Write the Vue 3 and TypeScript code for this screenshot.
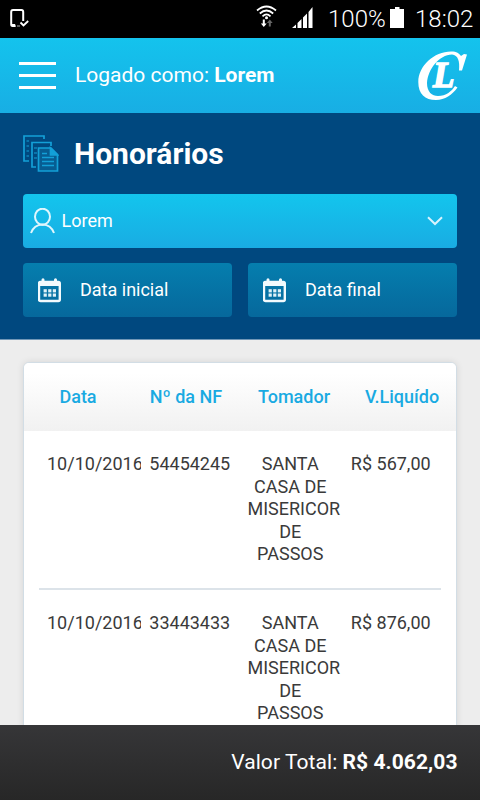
<script setup lang="ts">
interface Fee {
  date: string
  invoice: string
  client: string[]
  amount: string
}

const columns: string[] = ['Data', 'Nº da NF', 'Tomador', 'V.Liquído']
const client = ['SANTA', 'CASA DE', 'MISERICOR', 'DE', 'PASSOS']
const fees: Fee[] = [
  { date: '10/10/2016', invoice: '54454245', client, amount: 'R$ 567,00' },
  { date: '10/10/2016', invoice: '33443433', client, amount: 'R$ 876,00' },
]
const dateFields: string[] = ['Data inicial', 'Data final']
const calendarDots = [0, 1, 2, 3, 4, 5].map((i) => ({
  x: 5.6 + (i % 3) * 4.6,
  y: 11.2 + Math.floor(i / 3) * 4.3,
}))
</script>

<template>
  <div class="screen">
    <div class="status">
      <svg class="device-icon" width="20" height="20" viewBox="0 0 20 20">
        <path d="M13.200 12V3Q13.200 1 11.500 1H3Q1.200 1 1.200 3V15.500Q1.200 17 3 17H5" fill="none" stroke="#fff" stroke-width="2" />
        <path d="M1 15H5L6 17.800H2Z" fill="#fff" />
        <path d="M7 17H10" stroke="#999" stroke-width="1.2" />
        <path d="M10.500 13.500L13.500 16.500L18.200 12" fill="none" stroke="#fff" stroke-width="1.800" />
      </svg>
      <div class="status-right">
        <svg class="wifi" width="22" height="24" viewBox="0 0 22 24">
          <g fill="none" stroke="#fff" stroke-width="1.7">
            <path d="M1 5.500Q10.500 -2.500 20 5.500" />
            <path d="M3.800 8.500Q10.500 2.500 17.200 8.500" />
            <path d="M6.500 11.300Q10.500 7.500 14.500 11.300" />
          </g>
          <circle cx="10.500" cy="12.800" r="1.500" fill="#fff" />
          <path d="M6.800 14.500H8.800V18.500H10.700L7.800 22L4.900 18.500H6.800Z" fill="#fff" />
          <path d="M12.800 21.500V18H10.900L13.800 14.500L16.700 18H14.800V21.500Z" fill="#666" />
        </svg>
        <svg class="signal" width="21" height="21" viewBox="0 0 21 21" fill="#fff">
          <path d="M0 21L4 17.500V21ZM5.500 16L9.500 12V21H5.500ZM11 10.500L15 6.500V21H11ZM16.500 5L20.500 0V21H16.500Z" />
        </svg>
        <span class="percent">100%</span>
        <svg class="battery" width="14" height="21" viewBox="0 0 14 21" fill="#fff">
          <path d="M5 0H9.500V2H14V21H0V2H5Z" />
        </svg>
        <span class="clock">18:02</span>
      </div>
    </div>

    <header class="topbar">
      <div class="burger"><i></i><i></i><i></i></div>
      <p class="logged">Logado como: <b>Lorem</b></p>
      <svg class="logo" width="54" height="54" viewBox="0 0 54 54">
        <path
          d="M51 5.500L46 21.500L43 21.500C44 12 42 6 36 5.500C23 6 12 20 11 34C11 43 16 47 22 47C30 47 36 42 39 37L41.500 38.500C36 46 29 51 20 51C9 51 2.300 45 2.300 33C2.300 17 18 2.500 35 2.500C41 2.500 43 4.500 45 7L48 5Z"
          fill="#fff"
        />
        <text x="17" y="37.500">L</text>
      </svg>
    </header>

    <section class="filters">
      <div class="title-row">
        <svg width="36" height="38" viewBox="0 0 36 38" fill="none" stroke="#13a0d8" stroke-width="1.700">
          <path d="M6 26H1V1H21V4" />
          <path d="M13 32H9V7.500H28V11" />
          <path d="M3.500 6H6M3.500 11H6M3.500 16H6M3.500 21H6M11 13H14M11 18H14M11 23H14" stroke-width="1" />
          <path d="M15.500 13H28L34.500 19.500V36H15.500Z" fill="#075d92" />
          <path d="M27.500 13V20H34.500Z" fill="#13a0d8" />
          <path d="M19 18.500H24M19 22.500H31M19 26.500H31M19 30.500H31" />
        </svg>
        <h1>Honorários</h1>
      </div>
      <div class="select">
        <svg width="26" height="26" viewBox="0 0 26 26" fill="none" stroke="#e0f6fd" stroke-width="2">
          <ellipse cx="12.500" cy="8.700" rx="7.500" ry="8" />
          <path d="M1 25Q4 16.800 12.500 16.500Q21 16.800 24 25" />
        </svg>
        <span>Lorem</span>
        <svg class="chevron" width="16" height="10" viewBox="0 0 16 10" fill="none" stroke="#d8f3fd" stroke-width="2">
          <path d="M1 1.200L8 8L15 1.200" />
        </svg>
      </div>
      <div class="dates">
        <div v-for="field in dateFields" :key="field" class="date">
          <svg width="24" height="25" viewBox="0 0 24 25">
            <path d="M5 4V1.800M17.500 4V1.800" stroke="#f2fafd" stroke-width="3" stroke-linecap="round" />
            <rect x="1" y="4" width="20.800" height="19" rx="1.500" fill="none" stroke="#f2fafd" stroke-width="2.400" />
            <path d="M1 4H21.500V8H1Z" fill="#f2fafd" />
            <rect v-for="(dot, i) in calendarDots" :key="i" :x="dot.x" :y="dot.y" width="3.200" height="3.200" fill="#e1f2f8" />
          </svg>
          <span>{{ field }}</span>
        </div>
      </div>
    </section>

    <main class="content">
      <div class="card">
        <div class="head">
          <span v-for="column in columns" :key="column">{{ column }}</span>
        </div>
        <div class="rows">
          <div v-for="fee in fees" :key="fee.invoice" class="row">
            <div class="cell day">{{ fee.date }}</div>
            <div class="cell">{{ fee.invoice }}</div>
            <div class="cell client"><div v-for="line in fee.client" :key="line">{{ line }}</div></div>
            <div class="cell">{{ fee.amount }}</div>
          </div>
        </div>
      </div>
    </main>

    <footer class="total">
      <span>Valor Total: <b>R$ 4.062,03</b></span>
    </footer>
  </div>
</template>

<style>
body {
  margin: 0;
}
</style>

<style scoped>
* {
  box-sizing: border-box;
}
.screen {
  width: 480px;
  height: 800px;
  overflow: hidden;
  display: flex;
  flex-direction: column;
  background: #ededed;
  font-family: Roboto, sans-serif;
  font-size: 18px;
  color: #3a3a3a;
}
svg {
  display: block;
  flex: none;
}
.status {
  flex: 0 0 38px;
  display: flex;
  justify-content: space-between;
  padding: 0 8px 0 10px;
  background: #000;
  color: #fff;
}
.device-icon {
  margin-top: 9px;
}
.status-right {
  display: flex;
  font-size: 24px;
  font-weight: 300;
  line-height: 38px;
}
.wifi {
  margin: 5px 14px 0 0;
}
.signal {
  margin: 7px 15px 0 0;
}
.percent {
  width: 57px;
  white-space: nowrap;
}
.battery {
  margin: 7px 11px 0 5px;
}
.clock {
  width: 57px;
  white-space: nowrap;
}
.topbar {
  flex: 0 0 75px;
  display: flex;
  align-items: center;
  padding: 0 10px 0 19px;
  color: #fff;
  font-size: 21px;
  background: linear-gradient(#14c3ed, #18aee4);
}
.burger {
  width: 37px;
  display: flex;
  flex-direction: column;
  gap: 9px;
  margin-right: 19px;
}
.burger i {
  height: 3px;
  background: #fff;
}
.logged {
  margin: 0;
  padding-bottom: 2px;
  flex: 1;
}
.logo text {
  font-family: "Liberation Serif", serif;
  font-weight: bold;
  font-style: italic;
  font-size: 35px;
  fill: #fff;
  stroke: #fff;
  stroke-width: 1.500px;
}
.filters {
  flex: 0 0 227px;
  padding: 22px 23px 0;
  background: #00487f;
  border-bottom: 1px solid #7197b7;
  color: #fff;
}
.title-row {
  display: flex;
  align-items: center;
  gap: 15px;
  height: 38px;
}
h1 {
  margin: 0;
  font-size: 30px;
  line-height: 38px;
  font-weight: 700;
}
.select {
  display: flex;
  align-items: center;
  height: 54px;
  margin-top: 21px;
  padding: 0 14px 0 7px;
  border-radius: 4px;
  background: linear-gradient(#13c5ed, #19ace3);
}
.select span {
  flex: 1;
  margin-left: 5.500px;
  padding-bottom: 2px;
}
.dates {
  display: grid;
  grid-template-columns: 209px 209px;
  justify-content: space-between;
  margin-top: 15px;
}
.date {
  display: flex;
  align-items: center;
  gap: 18px;
  height: 54px;
  padding-left: 15px;
  border-radius: 4px;
  background: linear-gradient(#057eae, #06689c);
}
.date span {
  padding-bottom: 2px;
}
.content {
  flex: 1;
  min-height: 0;
  overflow: hidden;
  padding: 22px 23px 0;
}
.card {
  height: 440px;
  border: 1px solid #d2dde5;
  border-radius: 6px;
  background: #fff;
  box-shadow: 0 0 7px rgba(0, 0, 0, 0.1);
  overflow: hidden;
}
.head {
  display: grid;
  grid-template-columns: repeat(4, 1fr);
  height: 68px;
  line-height: 68px;
  text-align: center;
  font-weight: 500;
  color: #19aae2;
  background: linear-gradient(#fff 15%, #f1f1f1);
}
.rows {
  padding: 0 15px;
}
.row {
  display: grid;
  grid-template-columns: repeat(4, minmax(0, 1fr));
  height: 159px;
  padding-top: 22px;
  border-bottom: 2px solid #dce3e9;
  line-height: 22.500px;
  text-align: center;
}
.cell {
  white-space: nowrap;
}
.client {
  padding: 0 7.500px;
}
.client div {
  display: flex;
  justify-content: safe center;
}
.day {
  padding-left: 8px;
  margin-right: -1px;
  text-align: left;
  overflow: hidden;
}
.total {
  flex: 0 0 75px;
  display: flex;
  align-items: center;
  justify-content: flex-end;
  padding: 0 22.500px 2px 0;
  color: #fff;
  font-size: 21px;
  letter-spacing: 0.060px;
  background: linear-gradient(#363638, #272727);
}
</style>
